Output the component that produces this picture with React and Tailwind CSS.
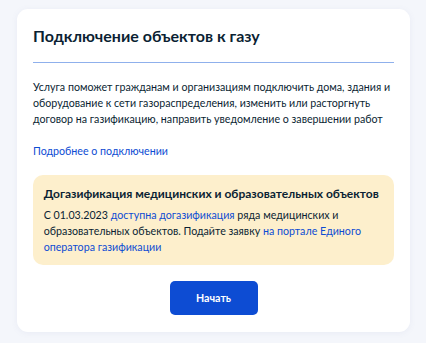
export default function App() {
  return (
    <div className="w-[426px] h-[343px] bg-[#f4f6fb] pt-[9px] pl-[17px] font-['Lato','Noto_Sans',sans-serif] text-[#0b1f33]">
      <div className="w-[393px] h-[323px] bg-white rounded-[11px] shadow-[0_1px_6px_rgba(100,120,170,0.08)] px-4 pt-[16px]">
        <h1 className="text-[16px] leading-[21px] font-bold">Подключение объектов к газу</h1>
        <div className="mt-[16px] h-px bg-[#8fb0ec]" />
        <p className="mt-[16px] text-[10.67px] leading-[16px]">
          Услуга поможет гражданам и организациям подключить дома, здания и оборудование к сети газораспределения, изменить или расторгнуть договор на газификацию, направить уведомление о завершении работ
        </p>
        <a className="block mt-[16px] text-[10.67px] leading-[16px] text-[#0d4cd3]">Подробнее о подключении</a>
        <div className="mt-[16px] bg-[#fdefcc] rounded-[10px] px-[10.67px] pt-[10.67px] pb-[10.67px]">
          <div className="text-[12px] leading-[16px] font-bold">Догазификация медицинских и образовательных объектов</div>
          <p className="mt-[5px] text-[10.67px] leading-[16px]">
            С 01.03.2023 <span className="text-[#0d4cd3]">доступна догазификация</span> ряда медицинских и образовательных объектов. Подайте заявку <span className="text-[#0d4cd3]">на портале Единого оператора газификации</span>
          </p>
        </div>
        <div className="flex justify-center mt-[16px]">
          <button className="w-[88px] h-[34px] rounded-[5px] bg-[#0d4cd3] text-white text-[10.67px] font-bold">Начать</button>
        </div>
      </div>
    </div>
  );
}
